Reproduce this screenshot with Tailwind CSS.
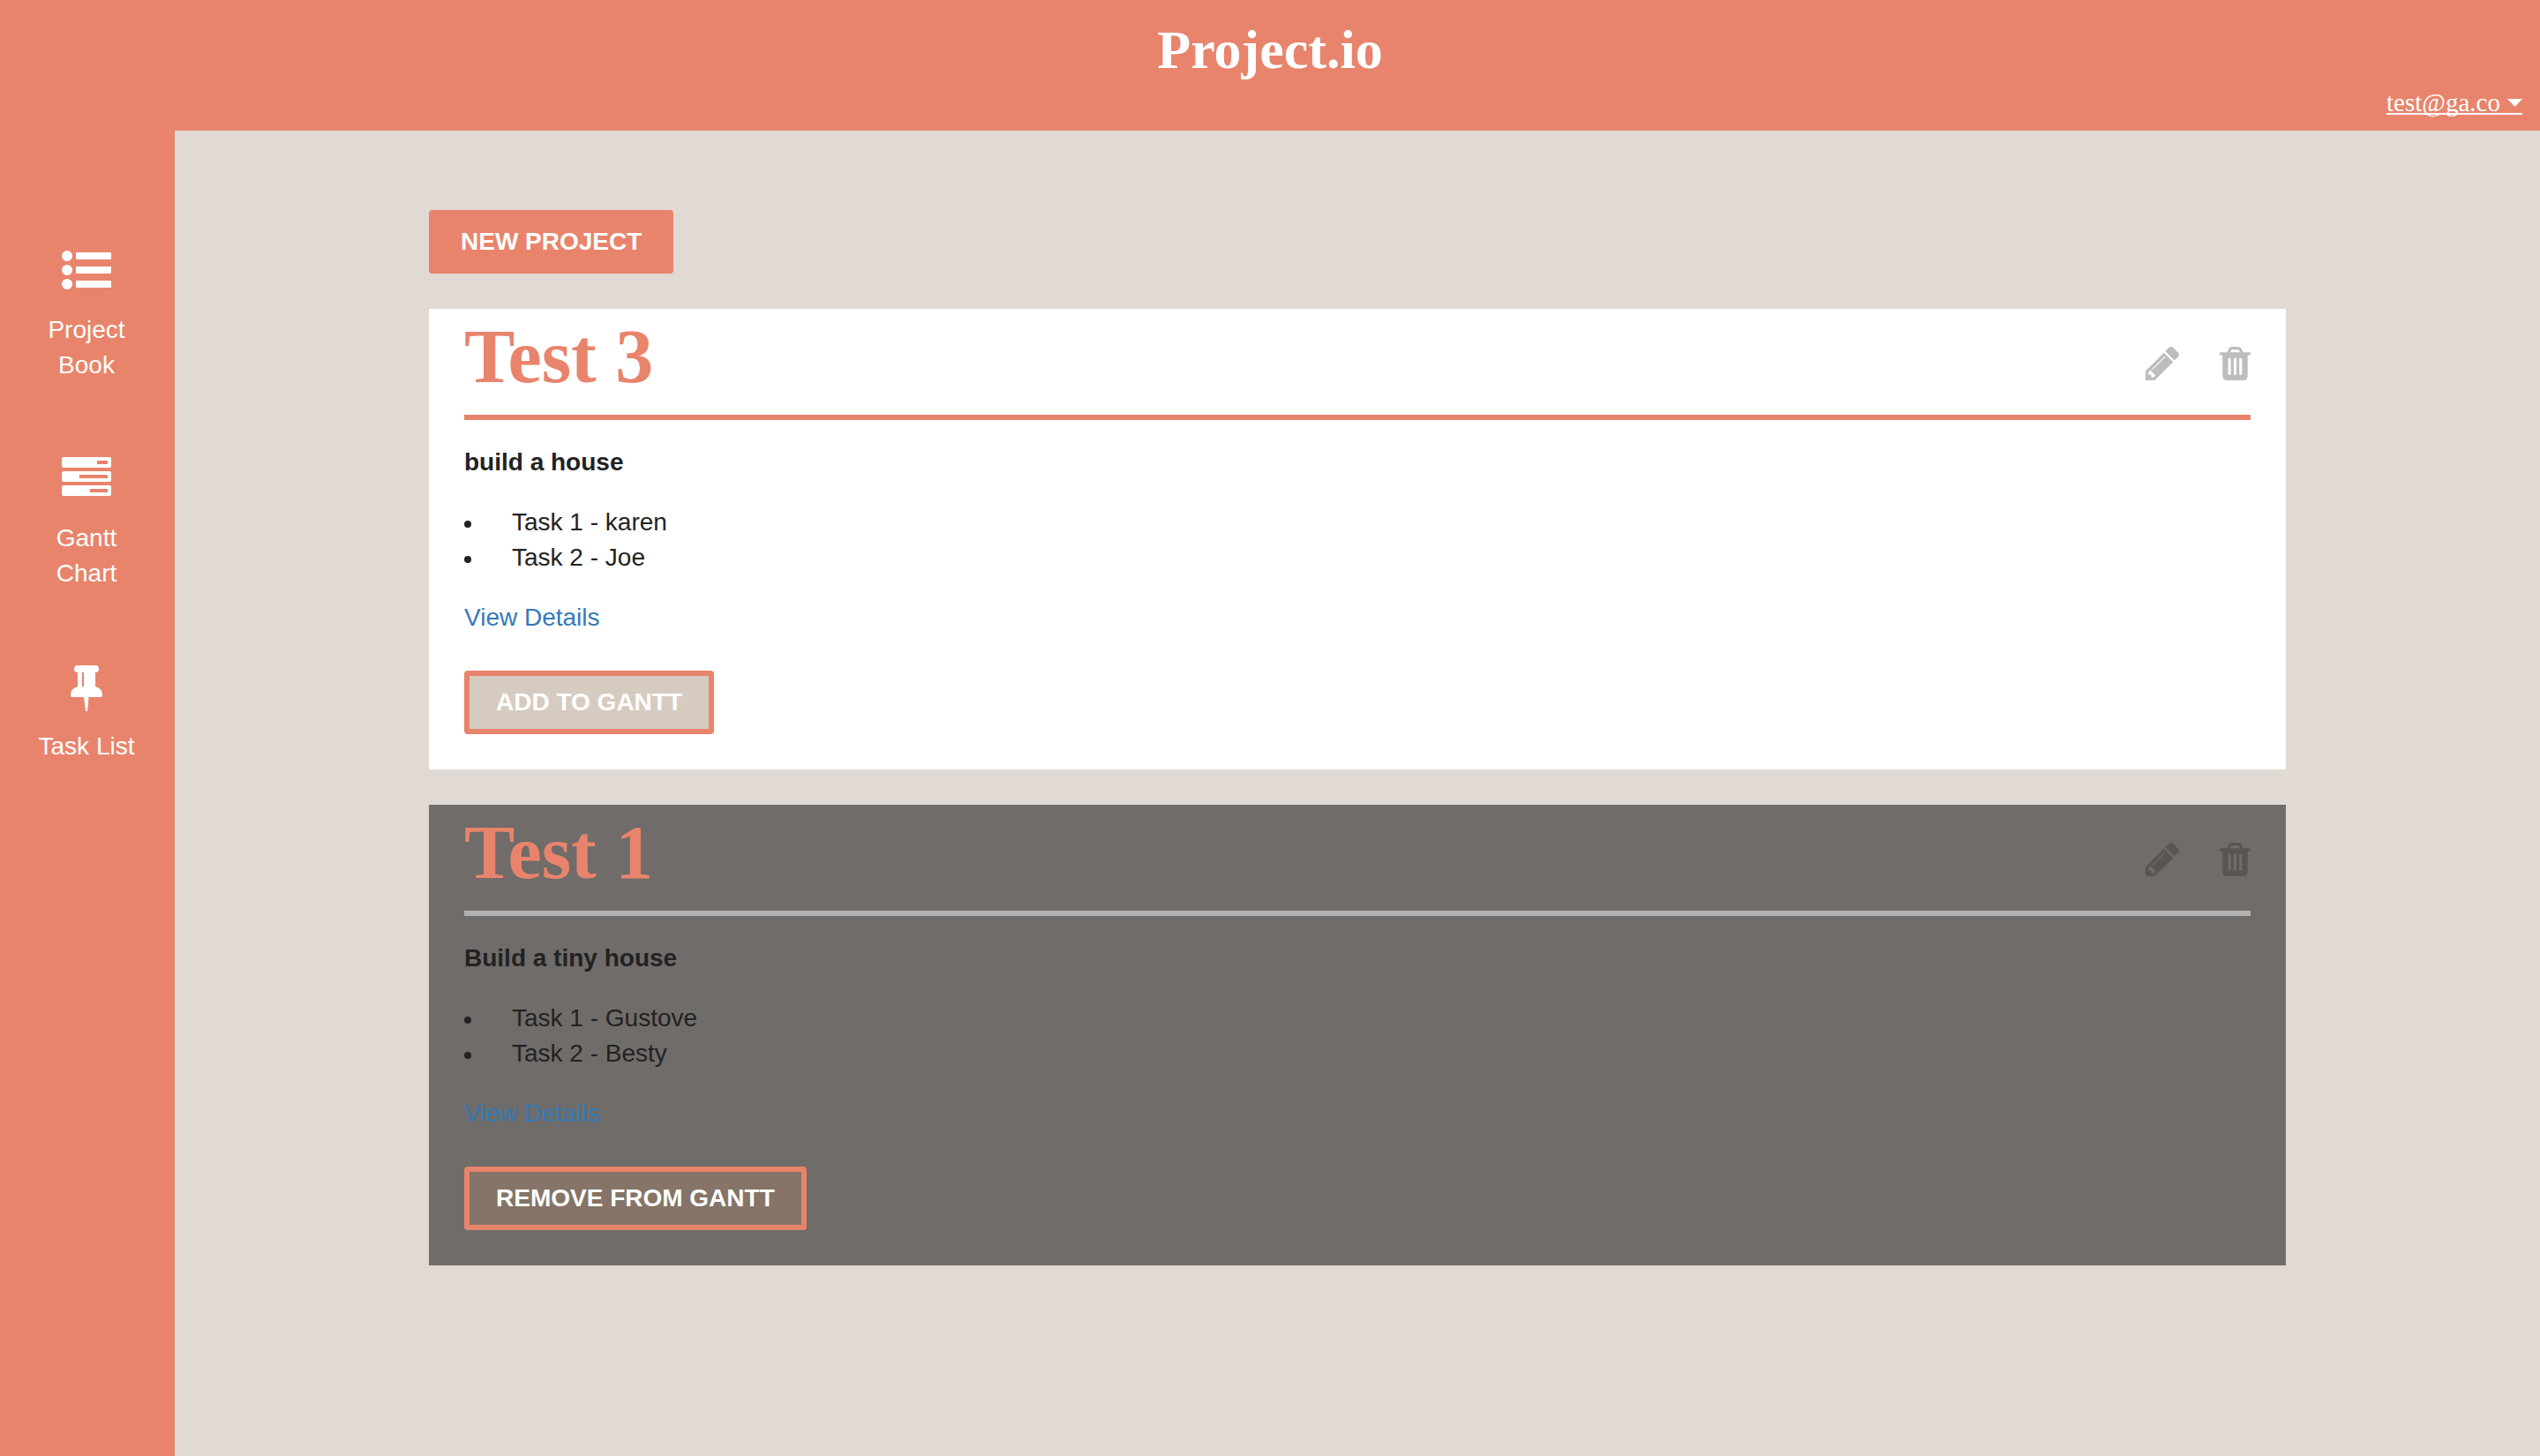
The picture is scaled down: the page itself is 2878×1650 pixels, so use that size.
<!DOCTYPE html>
<html lang="en">
<head>
<meta charset="utf-8">
<title>Project.io</title>
<script src="https://cdn.jsdelivr.net/npm/@tailwindcss/browser@4"></script>
</head>
<body class="flex min-h-screen flex-col bg-[#e1d9d3] font-['Liberation_Sans',sans-serif] text-[28px] leading-10 text-[#222]">
<svg class="hidden" aria-hidden="true">
  <symbol id="pencil" viewBox="128 149 1515 1515"><path d="M491 1536l91-91-235-235-91 91v107h128v128h107zm523-928q0-22-22-22-10 0-17 7l-542 542q-7 7-7 17 0 22 22 22 10 0 17-7l542-542q7-7 7-17zm-54-192l416 416-832 832h-416v-416zm683 96q0 53-37 90l-166 166-416-416 166-165q36-38 90-38 53 0 91 38l235 234q37 39 37 91z"/></symbol>
  <symbol id="trash" viewBox="192 128 1408 1536"><path d="M704 1376v-704q0-14-9-23t-23-9h-64q-14 0-23 9t-9 23v704q0 14 9 23t23 9h64q14 0 23-9t9-23zm256 0v-704q0-14-9-23t-23-9h-64q-14 0-23 9t-9 23v704q0 14 9 23t23 9h64q14 0 23-9t9-23zm256 0v-704q0-14-9-23t-23-9h-64q-14 0-23 9t-9 23v704q0 14 9 23t23 9h64q14 0 23-9t9-23zm-544-992h448l-48-117q-7-9-17-11h-317q-10 2-17 11zm928 32v64q0 14-9 23t-23 9h-96v948q0 83-47 143.500t-113 60.500h-832q-66 0-113-58.500t-47-141.500v-952h-96q-14 0-23-9t-9-23v-64q0-14 9-23t23-9h309l70-167q15-37 54-63t79-26h320q40 0 79 26t54 63l70 167h309q14 0 23 9t9 23z"/></symbol>
</svg>

<header class="flex flex-col bg-[#e8846c] px-5 pt-4 pb-[18px] font-['Liberation_Serif',serif] text-white">
  <h1 class="text-center text-[62px] leading-[80px] font-bold">Project.io</h1>
  <a href="#" class="mt-2 flex items-center gap-2 self-end border-b-2 border-white text-[29px] leading-6">test@ga.co
    <svg class="h-[9px] w-[17px] fill-white" viewBox="0 0 17 9" aria-hidden="true"><path d="M0 0h17L8.500 9z"/></svg>
  </a>
</header>

<div class="flex grow">
  <nav class="flex w-[198px] shrink-0 flex-col items-center gap-[84px] bg-[#e8846c] pt-[134px] pr-0.5 text-center text-white">
    <a href="#" class="flex w-28 flex-col items-center gap-5">
      <svg class="h-[52px] w-14 fill-white" viewBox="0 0 56 52" aria-hidden="true">
        <circle cx="6" cy="8" r="6"/><circle cx="6" cy="24" r="6"/><circle cx="6" cy="40" r="6"/>
        <rect x="16" y="4" width="40" height="8" rx="1"/><rect x="16" y="20" width="40" height="8" rx="1"/><rect x="16" y="36" width="40" height="8" rx="1"/>
      </svg>
      <span>Project Book</span>
    </a>
    <a href="#" class="flex w-20 flex-col items-center gap-5">
      <svg class="h-[52px] w-14 fill-white" viewBox="0 0 56 52" aria-hidden="true">
        <rect width="56" height="12" rx="2"/><rect y="16" width="56" height="12" rx="2"/><rect y="32" width="56" height="12" rx="2"/>
        <path class="fill-[#e8846c]" d="M40 4h12v4H40zM20 20h32v4H20zM32 36h20v4H32z"/>
      </svg>
      <span>Gantt Chart</span>
    </a>
    <a href="#" class="flex flex-col items-center gap-5">
      <svg class="h-[52px] w-14 fill-white" viewBox="0 0 56 52" aria-hidden="true">
        <path d="M18 0h20a4 4 0 0 1 0 8v16q8 2 8 10q0 2-2 2H30.500L29 52h-2L25 36H12q-2 0-2-2q0-8 8-10V8a4 4 0 0 1 0-8z"/>
        <path class="fill-[#e8846c]" d="M23 8h2v16h-2z"/>
      </svg>
      <span class="whitespace-nowrap">Task List</span>
    </a>
  </nav>

  <main class="flex grow flex-col gap-10 px-72 pt-[90px] pb-10">
    <button type="button" class="h-[72px] self-start rounded bg-[#e8846c] px-9 font-bold text-white">NEW PROJECT</button>

    <article class="bg-white px-10 pb-10">
      <div class="flex items-center justify-between border-b-6 border-[#e8846c] pb-3">
        <h2 class="font-['Liberation_Serif',serif] text-[86px] leading-[108px] font-bold text-[#e8846c]">Test 3</h2>
        <div class="flex gap-[46px] pt-4 text-[#bdbdbd]">
          <button type="button" aria-label="Edit"><svg class="size-[38px] fill-current"><use href="#pencil"/></svg></button>
          <button type="button" aria-label="Delete"><svg class="h-[38px] w-[35px] fill-current"><use href="#trash"/></svg></button>
        </div>
      </div>
      <p class="mt-7 font-bold">build a house</p>
      <ul class="my-7">
        <li class="flex items-center gap-[46px] before:mt-1 before:size-2 before:rounded-full before:bg-[#222]">Task 1 - karen</li>
        <li class="flex items-center gap-[46px] before:mt-1 before:size-2 before:rounded-full before:bg-[#222]">Task 2 - Joe</li>
      </ul>
      <p><a href="#" class="text-[#337ab7]">View Details</a></p>
      <button type="button" class="mt-10 block h-[72px] rounded border-6 border-[#e8846c] bg-[#d6cbc1] px-[30px] font-bold text-white">ADD TO GANTT</button>
    </article>

    <article class="bg-[#706c69] px-10 pb-10">
      <div class="flex items-center justify-between border-b-6 border-[#b4b2b1] pb-3">
        <h2 class="font-['Liberation_Serif',serif] text-[86px] leading-[108px] font-bold text-[#e8846c]">Test 1</h2>
        <div class="flex gap-[46px] pt-4 text-[#595552]">
          <button type="button" aria-label="Edit"><svg class="size-[38px] fill-current"><use href="#pencil"/></svg></button>
          <button type="button" aria-label="Delete"><svg class="h-[38px] w-[35px] fill-current"><use href="#trash"/></svg></button>
        </div>
      </div>
      <p class="mt-7 font-bold">Build a tiny house</p>
      <ul class="my-7">
        <li class="flex items-center gap-[46px] before:mt-1 before:size-2 before:rounded-full before:bg-[#222]">Task 1 - Gustove</li>
        <li class="flex items-center gap-[46px] before:mt-1 before:size-2 before:rounded-full before:bg-[#222]">Task 2 - Besty</li>
      </ul>
      <p><a href="#" class="text-[#337ab7]">View Details</a></p>
      <button type="button" class="mt-10 block h-[72px] rounded border-6 border-[#e8846c] bg-[#857467] px-[30px] font-bold text-white">REMOVE FROM GANTT</button>
    </article>
  </main>
</div>
</body>
</html>
